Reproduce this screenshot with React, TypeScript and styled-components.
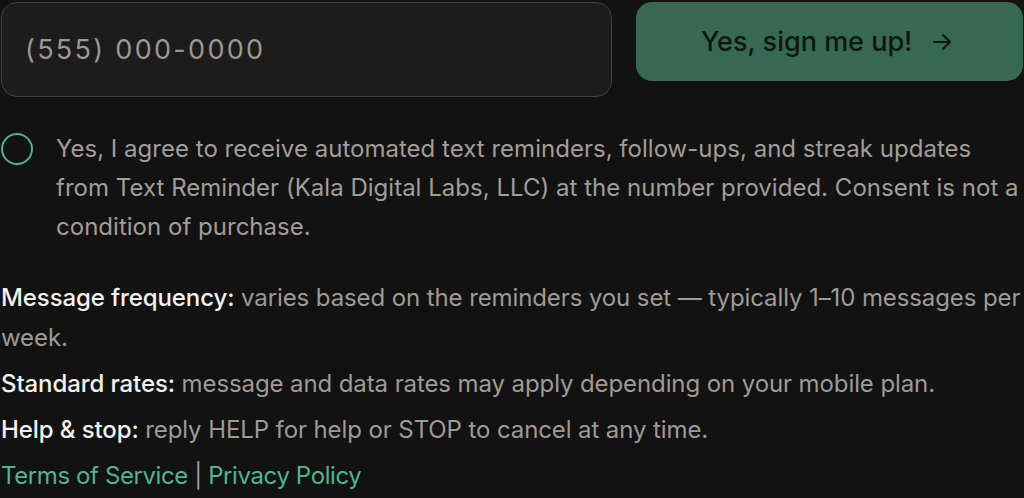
import React from "react";
import styled, { createGlobalStyle } from "styled-components";

const Global = createGlobalStyle`
  html, body { margin: 0; padding: 0; background: #121212; }
  body { font-family: Inter, "DejaVu Sans", sans-serif; }
  * { box-sizing: border-box; }
`;

const Page = styled.div`
  width: 1024px;
  height: 498px;
  overflow: hidden;
  background: #121212;
  padding: 2px 1px 0 1px;
  font-family: Inter, "Liberation Sans", sans-serif;
  font-size: 24px;
  letter-spacing: -0.1px;
`;

const FormRow = styled.div`
  display: grid;
  grid-template-columns: 611px 387px;
  column-gap: 24px;
  align-items: start;
`;

const PhoneInput = styled.input`
  height: 95px;
  width: 100%;
  background: #1c1c1c;
  border: 1.5px solid #424242;
  border-radius: 16px;
  padding: 0 0 0 23px;
  color: #e8e4df;
  font-family: inherit;
  font-size: 27px;
  letter-spacing: 2.3px;
  outline: none;
  &::placeholder { color: #9c9792; }
`;

const SubmitButton = styled.button`
  height: 79px;
  background: #376853;
  border: none;
  border-radius: 16px;
  color: #0e1712;
  font-family: inherit;
  font-size: 27px;
  font-weight: 500;
  display: flex;
  align-items: center;
  justify-content: center;
  gap: 18px;
  cursor: pointer;
  padding: 0 4px 0 0;
`;

const Consent = styled.label`
  display: flex;
  gap: 23px;
  margin-top: 32px;
  align-items: flex-start;
`;

const Radio = styled.span`
  flex: none;
  width: 32px;
  height: 32px;
  margin-top: 4px;
  border: 2px solid #4fb38e;
  border-radius: 50%;
`;

const ConsentText = styled.p`
  margin: 0;
  color: #a29d98;
  line-height: 39px;
  letter-spacing: 0.02px;
`;

const Info = styled.div`
  margin-top: 32px;
  display: flex;
  flex-direction: column;
  gap: 6px;
`;

const Para = styled.p`
  margin: 0;
  line-height: 40px;
`;

const Label = styled.span`
  color: #f4f2ef;
  font-weight: 500;
`;

const Value = styled.span`
  color: #9f9a95;
`;

const Links = styled.p`
  margin: 0;
  color: #9f9a95;
  line-height: 40px;
  letter-spacing: -0.4px;
`;

const Link = styled.a`
  color: #52b38e;
  text-decoration: none;
`;

const Arrow = () => (
  <svg width="24" height="24" viewBox="0 0 24 24" fill="none" stroke="currentColor" strokeWidth="2" strokeLinecap="round" strokeLinejoin="round">
    <path d="M4 12h16" />
    <path d="M13 5l7 7-7 7" />
  </svg>
);

export default function App() {
  return (
    <Page>
      <Global />
      <FormRow>
        <PhoneInput type="tel" placeholder="(555) 000-0000" />
        <SubmitButton>
          Yes, sign me up! <Arrow />
        </SubmitButton>
      </FormRow>
      <Consent>
        <Radio />
        <ConsentText>
          Yes, I agree to receive automated text reminders, follow-ups, and streak updates from Text Reminder (Kala Digital Labs, LLC) at the number provided. Consent is not a condition of purchase.
        </ConsentText>
      </Consent>
      <Info>
        <Para>
          <Label>Message frequency:</Label>{" "}
          <Value>varies based on the reminders you set — typically 1–10 messages per week.</Value>
        </Para>
        <Para>
          <Label>Standard rates:</Label>{" "}
          <Value>message and data rates may apply depending on your mobile plan.</Value>
        </Para>
        <Para>
          <Label>Help &amp; stop:</Label>{" "}
          <Value>reply HELP for help or STOP to cancel at any time.</Value>
        </Para>
        <Links>
          <Link href="#">Terms of Service</Link> | <Link href="#">Privacy Policy</Link>
        </Links>
      </Info>
    </Page>
  );
}
